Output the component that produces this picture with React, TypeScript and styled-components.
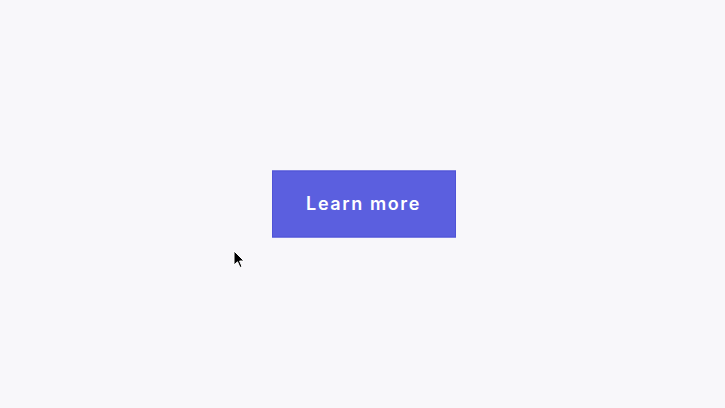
import styled, { createGlobalStyle } from 'styled-components';

const GlobalStyle = createGlobalStyle`
  html, body, #root {
    margin: 0;
    height: 100%;
  }
  body {
    background: #f8f7fa;
    font-family: Inter, 'Noto Sans', sans-serif;
  }
`;

const Page = styled.main`
  position: relative;
  height: 100vh;
  display: grid;
  place-items: center;
`;

const LearnButton = styled.button`
  width: 184px;
  height: 67px;
  padding: 0 0 2px;
  border: 1px solid #4f53d6;
  background: #5b5fdf;
  color: #ffffff;
  font-family: Inter, 'Noto Sans', sans-serif;
  font-weight: 600;
  font-size: 18px;
  letter-spacing: 1.6px;
  cursor: pointer;
  transform: translate(1px, -0.5px);
`;

const Pointer = styled.svg`
  position: absolute;
  left: 233px;
  top: 250px;
  width: 12px;
  height: 19px;
  pointer-events: none;
`;

export default function App() {
  return (
    <>
      <GlobalStyle />
      <Page>
        <LearnButton type='button'>Learn more</LearnButton>
        <Pointer viewBox='0 0 12 19'>
          <path
            d='M1 1 L1 15 L4.5 11.8 L7 17.5 L9 16.6 L6.6 11 L11 11 Z'
            fill='#000'
            stroke='#fff'
            strokeWidth='1'
            strokeLinejoin='round'
          />
        </Pointer>
      </Page>
    </>
  );
}
